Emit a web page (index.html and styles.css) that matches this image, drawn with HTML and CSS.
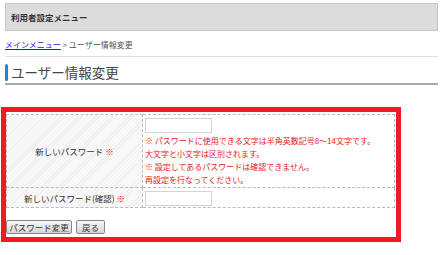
FILE: index.html
```html
<!DOCTYPE html>
<html lang="ja">
<head>
    <meta charset="UTF-8">
    <title>ユーザー情報変更</title>
    <link rel="stylesheet" href="styles.css">
</head>
<body>

<div class="page">
    <div class="menu-bar">利用者設定メニュー</div>

    <div class="breadcrumb">
        <a href="#">メインメニュー</a> &gt; ユーザー情報変更
    </div>

    <h1 class="title">ユーザー情報変更</h1>

    <form class="form-box">
        <table class="form-table">
            <tr>
                <th>新しいパスワード <span class="req">※</span></th>
                <td>
                    <input type="password" class="field">
                    <p class="note">
                        ※ パスワードに使用できる文字は半角英数記号8～14文字です。<br>
                        大文字と小文字は区別されます。<br>
                        ※ 設定してあるパスワードは確認できません。<br>
                        再設定を行なってください。
                    </p>
                </td>
            </tr>
            <tr>
                <th>新しいパスワード(確認) <span class="req">※</span></th>
                <td><input type="password" class="field"></td>
            </tr>
        </table>

        <div class="buttons">
            <button type="button" class="btn btn-wide">パスワード変更</button>
            <button type="button" class="btn btn-back">戻る</button>
        </div>
    </form>
</div>

</body>
</html>
```

FILE: styles.css
```css
body {
    margin: 0;
    background: #fff;
    font-family: "Noto Sans CJK JP", "Noto Sans", sans-serif;
    color: #333;
}

.page {
    padding: 3px 5px 0 5px;
}

.menu-bar {
    height: 26px;
    line-height: 26px;
    padding-left: 5px;
    background: #dcdcdc;
    border: 1px solid #c6c6c6;
    font-size: 8.5px;
    font-weight: bold;
    color: #333;
}

.breadcrumb {
    margin-top: 7px;
    padding-bottom: 4px;
    line-height: 14px;
    font-size: 8px;
    color: #555;
    border-bottom: 1px solid #dedede;
}

.breadcrumb a {
    color: #1a1ae0;
}

.title {
    display: flex;
    align-items: center;
    gap: 3px;
    margin: 7px 0 0 0;
    padding-bottom: 2px;
    height: 17px;
    font-size: 13.5px;
    font-weight: normal;
    line-height: 17px;
    color: #444;
    border-bottom: 2px solid #aaa;
}

.title::before {
    content: "";
    width: 3px;
    height: 17px;
    border-radius: 2px;
    background: #1787e0;
}

.form-box {
    margin: 22px -4px 0 -4px;
    width: 390px;
    padding: 2px 0 3px 0;
    border: 5px solid #ed1c24;
}

.form-table {
    width: 389px;
    border-collapse: collapse;
    border: 1px dashed #bbb;
}

.form-table th,
.form-table td {
    border: 1px dashed #bbb;
}

.form-table th {
    width: 135px;
    padding: 0;
    font-size: 8.5px;
    font-weight: normal;
    color: #333;
    background: repeating-linear-gradient(135deg, #fbfbfb 0, #fbfbfb 2px, #ececec 2px, #ececec 3px);
}

.form-table td {
    padding: 3px 2px 1px 2px;
    vertical-align: top;
}

.req {
    color: #e81820;
}

.field {
    display: block;
    box-sizing: border-box;
    width: 67px;
    height: 15px;
    margin: 0;
    border: 1px solid #d4d4d4;
}

.note {
    margin: 1px 0 0 0;
    font-size: 8px;
    line-height: 13px;
    color: #e81820;
}

.buttons {
    display: flex;
    gap: 4px;
    margin-top: 12px;
}

.btn {
    height: 14px;
    padding: 0;
    font-family: inherit;
    font-size: 8.5px;
    line-height: 12px;
    white-space: nowrap;
    color: #333;
    border: 1px solid #888;
    border-radius: 2px;
    background: linear-gradient(#f6f6f6, #d6d6d6);
}

.btn-wide {
    width: 66px;
}

.btn-back {
    width: 29px;
}
```
